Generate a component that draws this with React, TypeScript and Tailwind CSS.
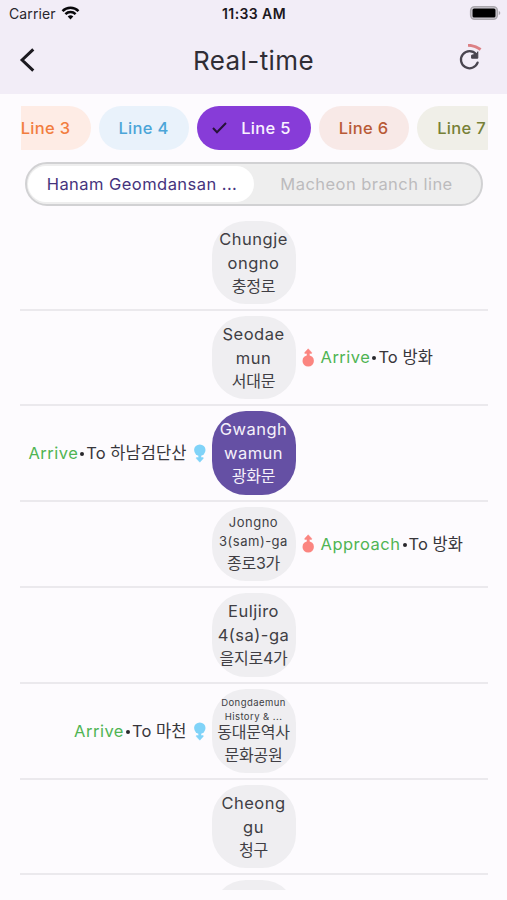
import type { ReactNode } from "react";

type Train = { status: string; dest: string };

type Station = {
  name: string[];
  korean: string[];
  row: string;
  nameStyle?: string;
  selected?: boolean;
  down?: Train;
  up?: Train;
};

const stations: Station[] = [
  { name: ["Chungje", "ongno"], korean: ["충정로"], row: "h-[95px]" },
  {
    name: ["Seodae", "mun"],
    korean: ["서대문"],
    row: "h-[95px]",
    up: { status: "Arrive", dest: "방화" },
  },
  {
    name: ["Gwangh", "wamun"],
    korean: ["광화문"],
    row: "h-[96px]",
    selected: true,
    down: { status: "Arrive", dest: "하남검단산" },
  },
  {
    name: ["Jongno", "3(sam)-ga"],
    korean: ["종로3가"],
    row: "h-[86px]",
    nameStyle: "text-[13px] leading-[19.5px] tracking-[0.5px]",
    up: { status: "Approach", dest: "방화" },
  },
  { name: ["Euljiro", "4(sa)-ga"], korean: ["을지로4가"], row: "h-[96px]" },
  {
    name: ["Dongdaemun", "History & ..."],
    korean: ["동대문역사", "문화공원"],
    row: "h-[96px]",
    nameStyle: "relative top-[2px] text-[9.5px] leading-[13.5px] tracking-[0.45px]",
    down: { status: "Arrive", dest: "마천" },
  },
  { name: ["Cheong", "gu"], korean: ["청구"], row: "h-[95px]" },
];

const Chip = ({ className, children }: { className: string; children: ReactNode }) => (
  <div
    className={`flex h-11 shrink-0 items-center justify-center rounded-full text-[16.5px] font-medium tracking-[0.3px] ${className}`}
  >
    {children}
  </div>
);

const StatusBar = () => (
  <div className="flex h-[27px] items-center justify-between pr-[6px] pl-[9px]">
    <div className="flex w-20 items-center gap-[5px]">
      <span className="text-[14px] tracking-[0.1px] text-[#29262d]">Carrier</span>
      <svg
        className="-mt-[2px] shrink-0"
        width="19"
        height="14"
        viewBox="0 0 18 14"
        fill="none"
        stroke="#09080b"
        strokeWidth="2.5"
      >
        <path d="M1 5.1a11.4 11.4 0 0 1 16 0" />
        <path d="M3.9 8.2a7.3 7.3 0 0 1 10.2 0" />
        <path d="M6.2 10.6a4 4 0 0 1 5.6 0L9 13.4z" fill="#09080b" stroke="none" />
      </svg>
    </div>
    <span className="pr-[2px] text-[14px] font-semibold tracking-[0.4px] text-[#1b1820]">11:33 AM</span>
    <div className="-mt-[2px] flex w-20 justify-end">
      <svg width="32" height="16" viewBox="0 0 32 16">
        <rect x="1.7" y="1.7" width="26.6" height="12.6" rx="4" fill="#d5d1d9" stroke="#aaa7ad" strokeWidth="1.6" />
        <rect x="3.5" y="3.5" width="23" height="9" rx="1.5" fill="#000" />
        <path d="M29.8 6c2 .8 2 3.2 0 4z" fill="#aaa7ad" />
      </svg>
    </div>
  </div>
);

const TrainIcon = ({ up }: { up?: boolean }) => (
  <svg
    width="12"
    height="20"
    viewBox="0 0 12 20"
    className={up ? "text-[#fb8580]" : "rotate-180 text-[#80d3f8]"}
    fill="currentColor"
  >
    <circle cx="6.2" cy="12.9" r="5.7" />
    <path d="M6.2 .8L9.6 4.4V5.4H7.4V9H5V5.4H2.8V4.4z" stroke="currentColor" strokeWidth=".5" strokeLinejoin="round" />
  </svg>
);

const TrainText = ({ train }: { train: Train }) => (
  <p className="flex items-center whitespace-nowrap text-[16.5px] tracking-[0.5px] text-[#38363b]">
    <span className="text-[#4fb453]">{train.status}</span>
    <span className="mx-[2px] mt-px size-1 rounded-full bg-[#29272c]" />
    <span className="tracking-[0.05px]">To {train.dest}</span>
  </p>
);

const StationRow = ({ station }: { station: Station }) => (
  <div className={`grid grid-cols-[192px_84px_192px] border-b-2 border-[#ebe9ed] py-[5px] ${station.row}`}>
    <div className="flex items-center justify-end gap-[7px] pr-[6px]">
      {station.down && (
        <>
          <TrainText train={station.down} />
          <TrainIcon />
        </>
      )}
    </div>
    <div
      className={`flex flex-col items-center justify-center rounded-[34px] pb-px whitespace-nowrap ${
        station.selected ? "bg-[#6550a4] text-[#f5f1fa]" : "bg-[#efeef1] text-[#403e44]"
      }`}
    >
      {station.name.map((line) => (
        <span key={line} className={station.nameStyle ?? "text-[16.5px] leading-6 tracking-[0.5px]"}>
          {line}
        </span>
      ))}
      {station.korean.map((line) => (
        <span key={line} className="text-[16px] leading-[23px] tracking-[-0.2px]">
          {line}
        </span>
      ))}
    </div>
    <div className="flex items-center gap-[7px] pl-[6px]">
      {station.up && (
        <>
          <TrainIcon up />
          <TrainText train={station.up} />
        </>
      )}
    </div>
  </div>
);

const App = () => {
  return (
    <main className="h-[900px] w-[507px] overflow-hidden bg-[#fdfbfe] font-['Inter','Noto_Sans_CJK_KR',sans-serif]">
      <header className="h-[94px] bg-[#f2edf7]">
        <StatusBar />
        <div className="flex h-[66px] items-center justify-between pr-[22px] pl-[19px]">
          <svg width="26" height="26" viewBox="0 0 26 26" fill="none" stroke="#1c1a20" strokeWidth="3">
            <path d="M14.3 2.3L3.1 13l11.2 10.7" />
          </svg>
          <h1 className="pl-[3px] text-[26px] tracking-[0.4px] text-[#302d35]">Real-time</h1>
          <svg width="26" height="32" viewBox="0 0 26 32" fill="none">
            <path d="M18.6 18.7a8.6 8.6 0 1 1-1.5-8.6" stroke="#49454f" strokeWidth="2.3" strokeLinecap="round" />
            <path d="M18.8 7.7v6.5h-6.2v-3L18 10z" fill="#49454f" stroke="#49454f" strokeLinejoin="round" />
            <path d="M9 1.3q6.800 .1 12.600 4.200" stroke="#dc8085" strokeWidth="3" />
          </svg>
        </div>
      </header>

      <div className="mx-auto mt-3 flex w-[468px] gap-2 overflow-hidden pl-[1px]">
        <Chip className="w-[70px] rounded-l-none bg-[#feece5] pr-[20px] text-[#f27d3e]">Line 3</Chip>
        <Chip className="w-[90px] bg-[#e9f2fb] text-[#4ba5d8]">Line 4</Chip>
        <Chip className="w-[114px] gap-[13px] bg-[#873cd8] pr-[5px] text-[#f9f2ff]">
          <svg width="17" height="14" viewBox="0 0 17 14" fill="none" stroke="#261238" strokeWidth="2">
            <path d="M2 7l4 4.2L15 2" />
          </svg>
          Line 5
        </Chip>
        <Chip className="w-[90px] bg-[#f8e9e7] text-[#b95a36]">Line 6</Chip>
        <Chip className="w-[90px] bg-[#f0efe8] text-[#778036]">Line 7</Chip>
      </div>

      <div className="mx-auto mt-3 flex h-11 w-[458px] items-center rounded-full border-2 border-[#d1d1d3] bg-[#eeeeee] pl-px text-[16.5px] tracking-[0.45px]">
        <div className="flex h-9 w-[226px] items-center justify-center rounded-full bg-white pl-[3px] text-[#45337d]">
          Hanam Geomdansan ...
        </div>
        <div className="flex flex-1 items-center justify-center pr-px text-[#bcbbbd]">Macheon branch line</div>
      </div>

      <section className="mx-auto mt-[10px] h-[674px] w-[468px] overflow-hidden">
        {stations.map((station) => (
          <StationRow key={station.korean[0]} station={station} />
        ))}
        <div className="mx-auto mt-[5px] h-[84px] w-[84px] rounded-[34px] bg-[#efeef1]" />
      </section>
    </main>
  );
};

export default App;
